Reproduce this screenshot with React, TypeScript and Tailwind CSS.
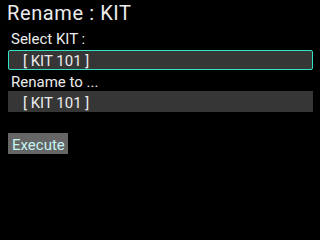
export default function App() {
  return (
    <div className="w-[320px] h-[240px] bg-black text-[#ececec] [font-family:Roboto,sans-serif] overflow-hidden">
      <div className="pl-[7px] pt-[2px] text-[20px] leading-[22px] tracking-[0.6px]">Rename : KIT</div>
      <div className="pl-[11px] mt-[6px] text-[15px] leading-[18px]">Select KIT :</div>
      <div className="ml-[8px] mt-[2px] h-[20px] w-[305px] bg-[#363636] border border-[#30e3c3] rounded-[2px] pl-[14px] pt-[1px] text-[15px] leading-[18px]">
        [ KIT 101 ]
      </div>
      <div className="pl-[11px] mt-[3px] text-[15px] leading-[18px]">Rename to ...</div>
      <div className="ml-[8px] h-[21px] w-[305px] bg-[#363636] pl-[15px] pt-[3px] text-[15px] leading-[18px]">
        [ KIT 101 ]
      </div>
      <div className="ml-[8px] mt-[21px] h-[21px] w-[60px] bg-[#666666] text-[#c4f4f4] text-[15px] leading-[18px] pl-[4px] pt-[3px]">
        Execute
      </div>
    </div>
  );
}
